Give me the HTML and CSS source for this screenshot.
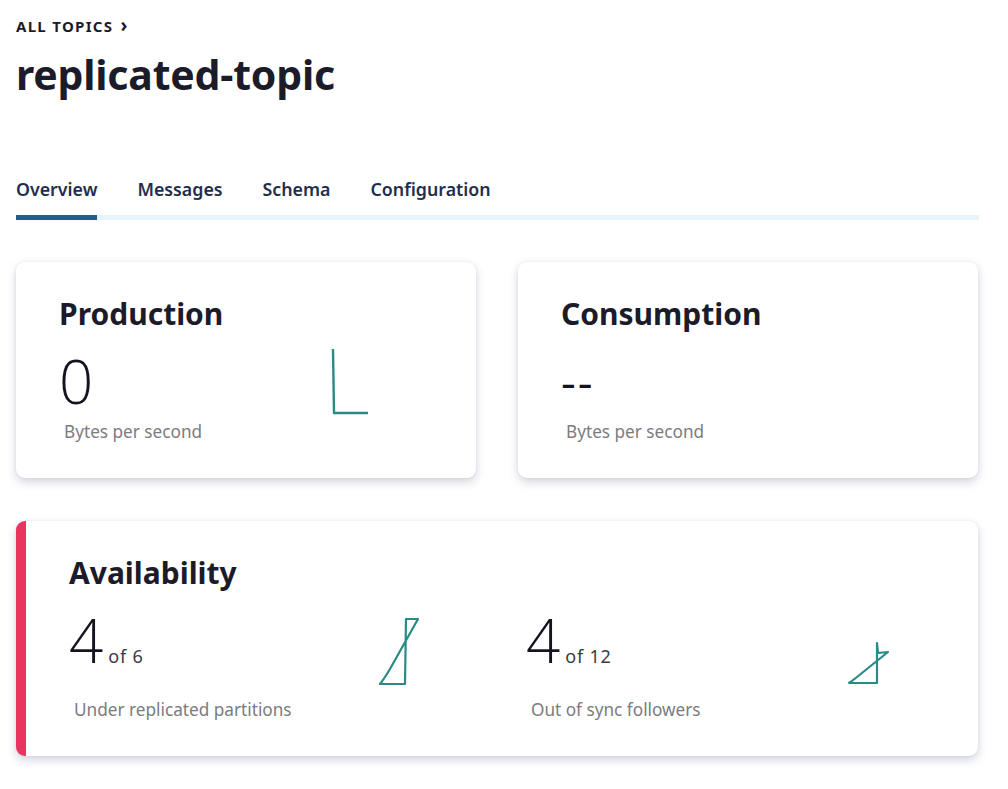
FILE: index.html
```html
<!DOCTYPE html>
<html>
<head>
<meta charset="utf-8">
<link rel="stylesheet" href="styles.css">
</head>
<body>
<div class="page">
  <div class="crumb">ALL TOPICS <span class="chev">›</span></div>
  <h1 class="title">replicated-topic</h1>

  <nav class="tabs">
    <a class="tab active">Overview</a>
    <a class="tab">Messages</a>
    <a class="tab">Schema</a>
    <a class="tab">Configuration</a>
  </nav>

  <div class="row">
    <section class="card">
      <h2 class="card-title">Production</h2>
      <div class="metric-row">
        <div class="metric">
          <div class="value">0</div>
          <div class="label">Bytes per second</div>
        </div>
        <svg class="spark spark-l" width="40" height="70" viewBox="0 0 40 70">
          <path d="M2 2 L3 66 L37 66" fill="none" stroke="#2a8a85" stroke-width="2.4" stroke-linejoin="round"/>
        </svg>
      </div>
    </section>
    <section class="card">
      <h2 class="card-title">Consumption</h2>
      <div class="metric-row">
        <div class="metric">
          <div class="value dash">--</div>
          <div class="label">Bytes per second</div>
        </div>
      </div>
    </section>
  </div>

  <section class="card alert">
    <h2 class="card-title">Availability</h2>
    <div class="avail-grid">
      <div class="metric-row">
        <div class="metric">
          <div class="value">4<span class="of">of 6</span></div>
          <div class="label">Under replicated partitions</div>
        </div>
        <svg class="spark spark-a" width="44" height="72" viewBox="0 0 44 72">
          <path d="M2 67 L27 67 L28 2 L40 2 L12 52 Q6 62 2 67 Z" fill="none" stroke="#2a8a85" stroke-width="2.2" stroke-linejoin="round"/>
        </svg>
      </div>
      <div class="metric-row">
        <div class="metric">
          <div class="value">4<span class="of">of 12</span></div>
          <div class="label">Out of sync followers</div>
        </div>
        <svg class="spark spark-b" width="44" height="46" viewBox="0 0 44 46">
          <path d="M2 42 L30 42 L30 2 L31 12 L41 11 L10 36 Q5 40 2 42 Z" fill="none" stroke="#2a8a85" stroke-width="2.2" stroke-linejoin="round"/>
        </svg>
      </div>
    </div>
  </section>
</div>
</body>
</html>
```

FILE: styles.css
```css
* { box-sizing: border-box; }
html, body { margin: 0; padding: 0; background: #fff; }
body {
  font-family: "Noto Sans", "Open Sans", sans-serif;
  color: #1b1b2a;
}
.page {
  padding: 16px 29px 30px 16px;
}
.crumb {
  font-size: 15px;
  font-weight: 700;
  letter-spacing: 1.3px;
  line-height: 20px;
  color: #1b1b2a;
}
.chev { font-size: 19px; margin-left: 2px; line-height: 18px; }
.title {
  margin: 13px 0 0;
  font-size: 41px;
  font-weight: 700;
  line-height: 50px;
  letter-spacing: -0.2px;
}
.tabs {
  margin-top: 78px;
  display: flex;
  gap: 40px;
  border-bottom: 5px solid #e8f4fb;
}
.tab {
  font-size: 17.8px;
  font-weight: 600;
  color: #1f2e4c;
  padding-bottom: 14px;
  margin-bottom: -5px;
  border-bottom: 5px solid transparent;
  line-height: 24px;
}
.tab.active { border-bottom-color: #1d6189; }

.row {
  margin-top: 42px;
  display: grid;
  grid-template-columns: 460px 460px;
  gap: 42px;
}
.card {
  background: #fff;
  border-radius: 9px;
  box-shadow: 0 4px 10px rgba(50, 60, 110, 0.22), 0 0 3px rgba(50, 60, 110, 0.07);
  padding: 33px 20px 20px 43px;
  height: 216px;
}
.card-title {
  margin: 0;
  font-size: 30px;
  font-weight: 700;
  line-height: 38px;
}
.metric-row {
  display: flex;
  align-items: flex-start;
}
.metric { width: 272px; }
.value {
  font-family: "Open Sans", "Noto Sans", sans-serif;
  font-weight: 300;
  font-size: 60px;
  line-height: 64px;
  margin-top: 16px;
  color: #141420;
}
.value.dash { font-weight: 400; font-size: 46px; letter-spacing: 2px; }
.label {
  font-size: 17.2px;
  color: #7b7b80;
  margin-left: 5px;
  margin-top: 8px;
  line-height: 22px;
}
.spark { display: block; }
.spark-l { margin-top: 14px; }

.alert {
  margin-top: 43px;
  height: 235px;
  border-left: 10px solid #ea3460;
  padding: 33px 20px 20px 43px;
  width: 962px;
}
.avail-grid {
  display: grid;
  grid-template-columns: 457px 1fr;
}
.alert .metric { width: 311px; }
.of {
  font-family: "Noto Sans", sans-serif;
  font-size: 18px;
  font-weight: 400;
  letter-spacing: 0.8px;
  color: #3a3a45;
  margin-left: 5px;
}
.alert .label { margin-top: 11px; }
.spark-a { margin-top: 25px; margin-left: -2px; }
.spark-b { margin-top: 49px; margin-left: 10px; }
```
